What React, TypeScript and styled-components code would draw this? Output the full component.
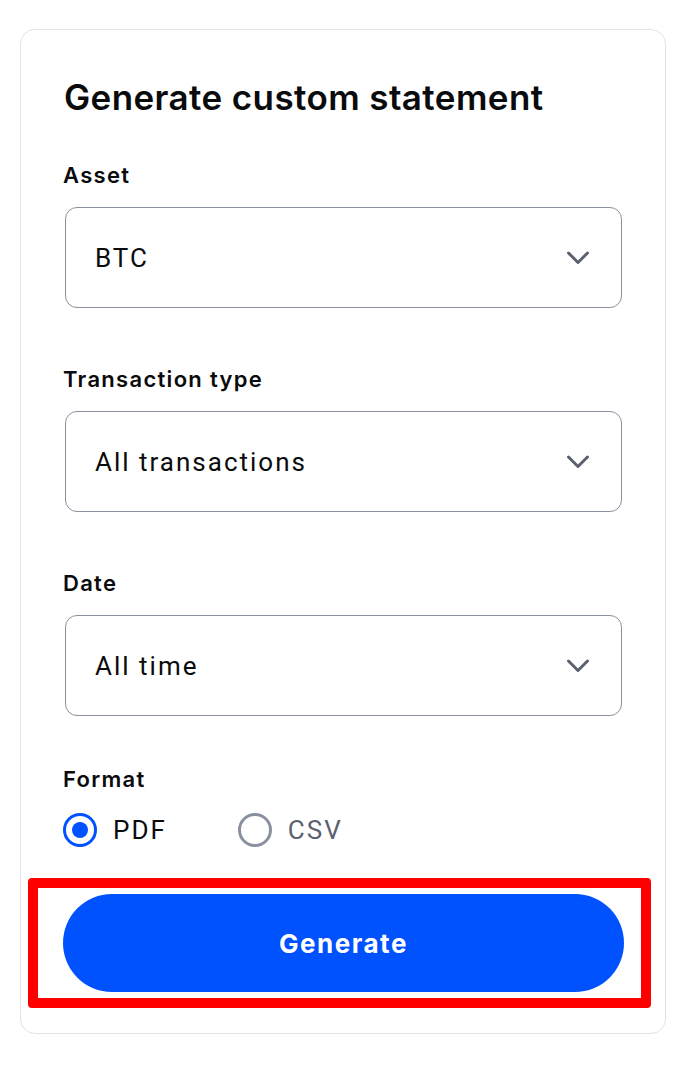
import React, { useState } from "react";
import styled, { createGlobalStyle } from "styled-components";

const GlobalStyle = createGlobalStyle`
  html, body { margin: 0; padding: 0; background: #ffffff; }
  body { font-family: Inter, "Noto Sans", sans-serif; color: #0a0b0d; }
  * { box-sizing: border-box; }
`;

const Page = styled.div`
  padding: 29px 22px 32px 20px;
`;

const Card = styled.section`
  width: 646px;
  border: 1px solid #e0e2e6;
  border-radius: 15px;
  padding: 47px 42px 41px 42px;
  display: flex;
  flex-direction: column;
`;

const Title = styled.h1`
  margin: 0 0 44px 1px;
  font-family: Inter, sans-serif;
  font-weight: 600;
  font-size: 35px;
  line-height: 40px;
  letter-spacing: 0.4px;
  color: #0a0b0d;
`;

const Field = styled.div<{ $gap?: number }>`
  display: flex;
  flex-direction: column;
  margin-bottom: ${(p) => p.$gap ?? 57}px;
`;

const Label = styled.label<{ $mb?: number }>`
  font-family: Inter, sans-serif;
  font-weight: 600;
  font-size: 22px;
  line-height: 28px;
  letter-spacing: 1.3px;
  margin: 0 0 ${(p) => p.$mb ?? 18}px 0;
  color: #0a0b0d;
`;

const SelectBox = styled.button`
  display: flex;
  align-items: center;
  justify-content: space-between;
  width: 557px;
  height: 101px;
  margin-left: 2px;
  padding: 0 31px 0 29px;
  border: 1px solid #8a919e;
  border-radius: 12px;
  background: #ffffff;
  cursor: pointer;
  font-family: Roboto, "Liberation Sans", sans-serif;
  font-size: 26px;
  letter-spacing: 2px;
  color: #0a0b0d;
  text-align: left;
`;

const Chevron = () => (
  <svg width="24" height="14" viewBox="0 0 24 14" fill="none">
    <path d="M2.5 2 L12 11.5 L21.5 2" stroke="#5b616e" strokeWidth="3" strokeLinecap="round" strokeLinejoin="round" />
  </svg>
);

const RadioRow = styled.div`
  display: flex;
  align-items: center;
  gap: 71px;
  margin-bottom: 47px;
`;

const RadioOption = styled.label`
  display: flex;
  align-items: center;
  gap: 16px;
  cursor: pointer;
`;

const RadioCircle = styled.span<{ $checked: boolean }>`
  width: 34px;
  height: 34px;
  border-radius: 50%;
  border: 3px solid ${(p) => (p.$checked ? "#0052ff" : "#8a919e")};
  display: flex;
  align-items: center;
  justify-content: center;
  &::after {
    content: "";
    width: 16px;
    height: 16px;
    border-radius: 50%;
    background: #0052ff;
    display: ${(p) => (p.$checked ? "block" : "none")};
  }
`;

const RadioText = styled.span<{ $checked: boolean }>`
  font-family: Roboto, "Liberation Sans", sans-serif;
  font-size: 26px;
  letter-spacing: 2px;
  color: ${(p) => (p.$checked ? "#0a0b0d" : "#5b616e")};
`;

const ButtonWrap = styled.div`
  position: relative;
`;

const Highlight = styled.div`
  position: absolute;
  left: -35px;
  right: -28px;
  top: -16px;
  bottom: -16px;
  border: 10px solid #ff0000;
  border-radius: 4px;
  pointer-events: none;
`;

const PrimaryButton = styled.button`
  width: 561px;
  height: 98px;
  border: none;
  border-radius: 49px;
  background: #0052ff;
  color: #ffffff;
  font-family: Inter, sans-serif;
  font-weight: 700;
  font-size: 26px;
  letter-spacing: 1.5px;
  cursor: pointer;
  display: flex;
  align-items: center;
  justify-content: center;
`;

const fields = [
  { label: "Asset", value: "BTC" },
  { label: "Transaction type", value: "All transactions" },
  { label: "Date", value: "All time" },
];

export default function App() {
  const [format, setFormat] = useState<"PDF" | "CSV">("PDF");
  return (
    <>
      <GlobalStyle />
      <Page>
        <Card>
          <Title>Generate custom statement</Title>
          {fields.map((f, i) => (
            <Field key={f.label} $gap={i === fields.length - 1 ? 49 : 57}>
              <Label>{f.label}</Label>
              <SelectBox type="button">
                <span>{f.value}</span>
                <Chevron />
              </SelectBox>
            </Field>
          ))}
          <Label $mb={20}>Format</Label>
          <RadioRow>
            {(["PDF", "CSV"] as const).map((opt) => (
              <RadioOption key={opt} onClick={() => setFormat(opt)}>
                <RadioCircle $checked={format === opt} />
                <RadioText $checked={format === opt}>{opt}</RadioText>
              </RadioOption>
            ))}
          </RadioRow>
          <ButtonWrap>
            <PrimaryButton type="button">Generate</PrimaryButton>
            <Highlight />
          </ButtonWrap>
        </Card>
      </Page>
    </>
  );
}
